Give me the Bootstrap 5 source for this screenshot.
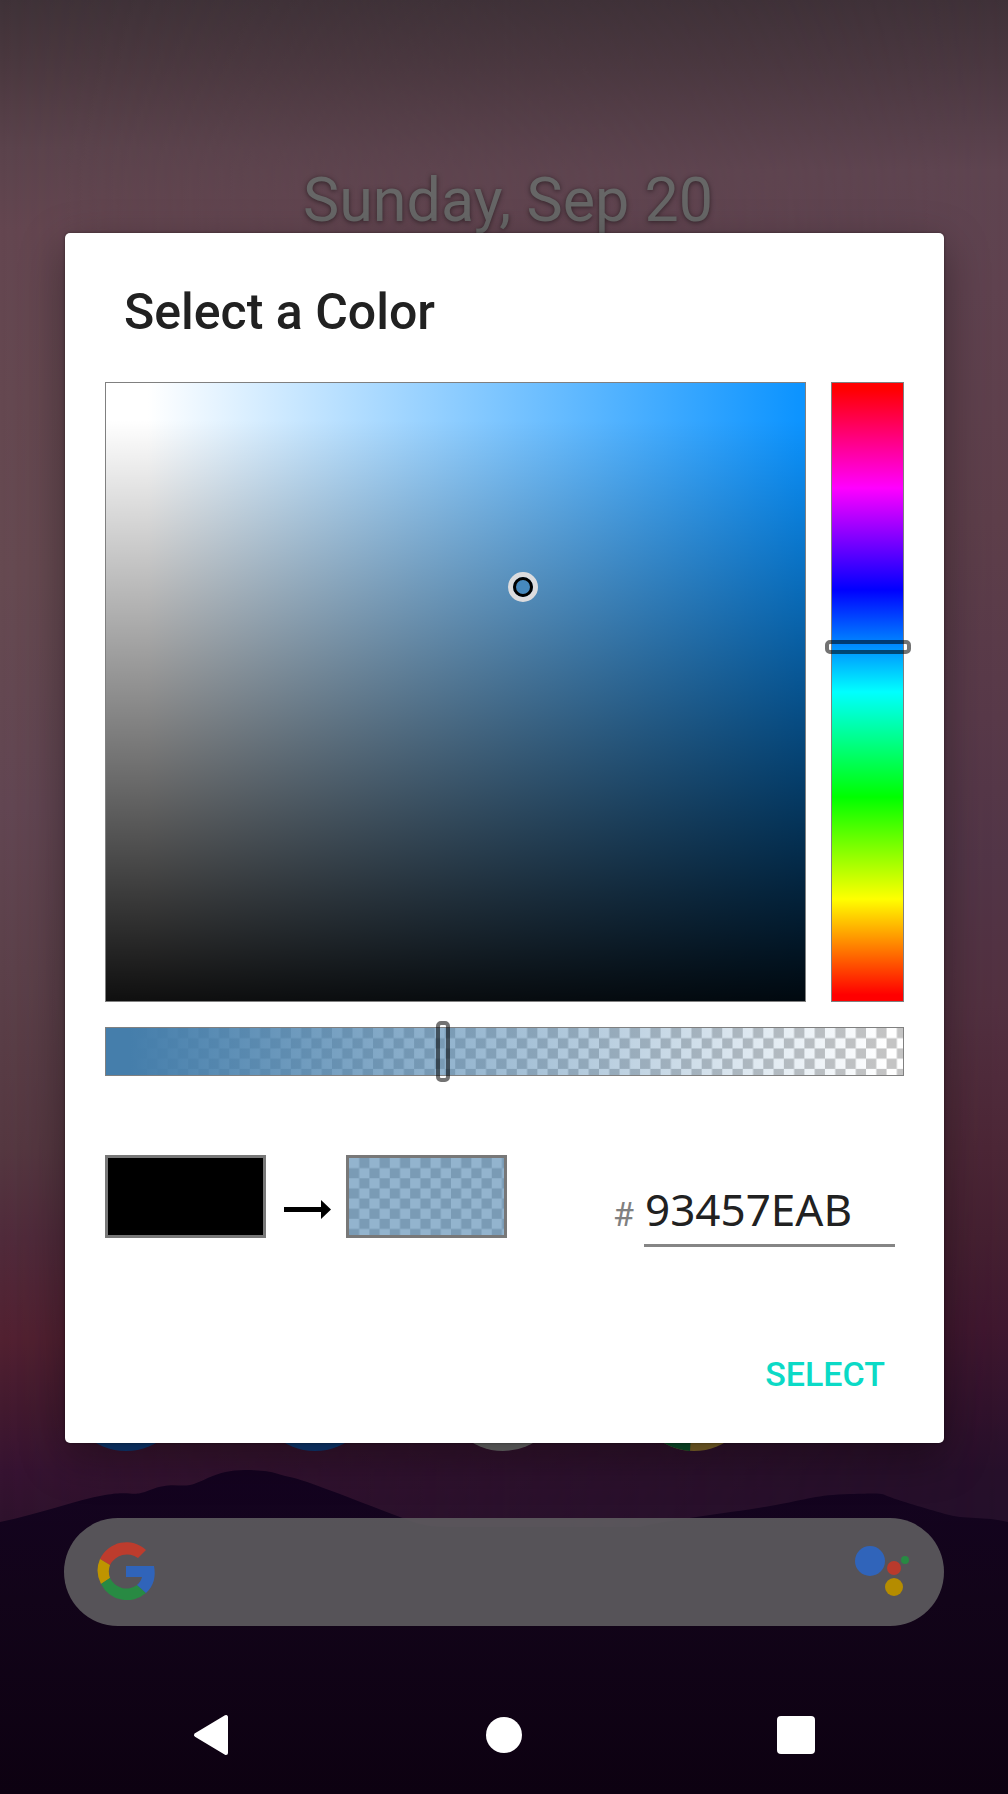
<!DOCTYPE html>
<html lang="en">
<head>
<meta charset="utf-8">
<meta name="viewport" content="width=device-width, initial-scale=1">
<title>Select a Color</title>
<link href="https://cdn.jsdelivr.net/npm/bootstrap@5.3.0/dist/css/bootstrap.min.css" rel="stylesheet">
<style>
  body { font-family: Roboto, "Liberation Sans", sans-serif; background: #0e0113; }
  .home-date { margin-top: 140px; font-size: 61px; line-height: 120px; color: #666; text-shadow: 0 1px 5px rgba(0,0,0,.5); padding-left: 8px; }
  .dock { padding: 0 64px; margin-bottom: 67px; }
  .app-icon { width: 120px; height: 120px; margin-left: 2px; }
  .search-pill { height: 108px; margin: 0 64px 50px; padding: 0 35px 0 33px; border-radius: 54px; background: rgba(94,92,95,.9); }
  .nav-keys { height: 118px; padding: 0 97px 0 96px; }
  .nav-key { width: 230px; height: 118px; }
  .dialog-layer { inset: 0 0 118px 0; padding: 0 64px 0 65px; }
  .dialog-panel { border-radius: 5px; box-shadow: 0 14px 44px rgba(0,0,0,.36), 0 0 3px rgba(0,0,0,.4); }
  .dialog-title { padding: 50px 59px 41px; font-size: 50px; line-height: 58px; font-weight: 500; color: #212121; }
  .picker { padding: 0 40px; }
  .picker-main { height: 620px; gap: 25px; }
  .edge { border: 1px solid #808080; }
  .sat-val {
    background:
      linear-gradient(to bottom, rgba(0,0,0,0) 6%, rgba(0,0,0,.94) 100%),
      linear-gradient(to right, #fff 6%, #0d94ff 99%);
  }
  .sat-marker { left: 59.6%; top: 33%; width: 30px; height: 30px; margin: -15px 0 0 -15px; border: 5px solid #dcdcde; }
  .sat-marker::after { content: ""; display: block; width: 20px; height: 20px; border: 3px solid #000; border-radius: 50%; background: #4688bd; }
  .hue-bar { width: 73px; background: linear-gradient(to bottom, #f00 1%, #f0f 17%, #00f 33.5%, #0ff 50%, #0f0 67%, #ff0 83.5%, #f00 99%); }
  .alpha-bar { height: 49px; margin-top: 25px; }
  .slide { -webkit-appearance: none; appearance: none; background: transparent; margin: 0; padding: 0; }
  .slide::-webkit-slider-thumb { -webkit-appearance: none; width: 14px; border: 4px solid rgba(0,0,0,.55); border-radius: 5px; background: transparent; }
  .slide-hue { width: 634px; height: 86px; left: 79px; top: -7px; transform-origin: 0 0; transform: rotate(90deg); }
  .slide-hue::-webkit-slider-thumb { height: 86px; }
  .slide-alpha { width: calc(100% + 14px); height: 61px; left: -8px; top: -7px; }
  .slide-alpha::-webkit-slider-thumb { height: 61px; }
  .result-row { margin-top: 79px; height: 92px; }
  .swatch { width: 161px; height: 83px; border: 3px solid #787878; }
  .swatch-old { background: #000; }
  .arrow { width: 47px; height: 19px; margin: 45px 15px 0 18px; }
  .hex-mark { font-size: 34px; line-height: 42px; color: #808080; padding: 0 10px 12px 0; }
  .hex-field { width: 251px; height: 74px; margin-right: 9px; padding: 0 1px; border: 0; border-bottom: 3px solid #858585; font-family: "Noto Sans", sans-serif; font-size: 44px; color: #212121; background: transparent; outline: 0; }
  .dialog-actions { padding: 79px 32px 21px; }
  .btn-select { height: 96px; padding: 0 27px; font-size: 34px; line-height: 40px; font-weight: 500; color: #0bdac6; border: 0; }
</style>
<script src="https://cdn.jsdelivr.net/npm/bootstrap@5.3.0/dist/js/bootstrap.bundle.min.js"></script>
</head>
<body>
<div class="position-relative min-vh-100 d-flex flex-column overflow-hidden">
  <!-- wallpaper: dusk sky with hills -->
  <svg class="position-absolute top-0 start-0 w-100 h-100" viewBox="0 0 1008 1794" preserveAspectRatio="none" aria-hidden="true">
    <defs>
      <linearGradient id="skyLeft" x1="0" y1="0" x2="0" y2="1">
        <stop offset="0" stop-color="#3f3238"/><stop offset=".04" stop-color="#4c3940"/><stop offset=".083" stop-color="#5b434c"/>
        <stop offset=".128" stop-color="#644650"/><stop offset=".32" stop-color="#664a51"/><stop offset=".45" stop-color="#624652"/>
        <stop offset=".54" stop-color="#5c414a"/><stop offset=".64" stop-color="#553841"/><stop offset=".69" stop-color="#502b3b"/>
        <stop offset=".746" stop-color="#522131"/><stop offset=".785" stop-color="#431a2f"/><stop offset=".82" stop-color="#361331"/>
        <stop offset=".85" stop-color="#2e122c"/>
      </linearGradient>
      <linearGradient id="skyRight" x1="0" y1="0" x2="0" y2="1">
        <stop offset="0" stop-color="#3f3138"/><stop offset=".04" stop-color="#4b3841"/><stop offset=".095" stop-color="#5e4450"/>
        <stop offset=".16" stop-color="#5f424f"/><stop offset=".29" stop-color="#5d3e4a"/><stop offset=".4" stop-color="#583949"/>
        <stop offset=".48" stop-color="#523547"/><stop offset=".56" stop-color="#523040"/><stop offset=".64" stop-color="#4c2636"/>
        <stop offset=".69" stop-color="#452031"/><stop offset=".74" stop-color="#3f172f"/><stop offset=".785" stop-color="#31122c"/>
        <stop offset=".82" stop-color="#260f2a"/><stop offset=".85" stop-color="#240f2a"/>
      </linearGradient>
      <linearGradient id="across"><stop offset="0" stop-color="#000"/><stop offset="1" stop-color="#fff"/></linearGradient>
      <mask id="fade"><rect width="1008" height="1794" fill="url(#across)"/></mask>
      <linearGradient id="hill" x1="0" y1="0" x2="0" y2="1">
        <stop offset="0" stop-color="#140320"/><stop offset=".4" stop-color="#120419"/><stop offset="1" stop-color="#0d0111"/>
      </linearGradient>
    </defs>
    <rect width="1008" height="1794" fill="url(#skyLeft)"/>
    <rect width="1008" height="1794" fill="url(#skyRight)" mask="url(#fade)"/>
    <path fill="url(#hill)" d="M0 1522C40 1514 75 1500 105 1495S130 1498 150 1490 178 1487 190 1485 215 1470 245 1470 275 1474 290 1477 350 1498 400 1517C420 1525 430 1527 450 1527H640C660 1521 730 1513 770 1506S815 1495 850 1494 880 1493 890 1497 925 1508 945 1514 985 1516 1008 1522V1794H0Z"/>
  </svg>

  <header class="position-relative text-center">
    <p class="home-date mb-0">Sunday, Sep 20</p>
  </header>

  <div class="dock position-relative d-flex mt-auto">
    <svg class="app-icon" viewBox="0 0 120 120" role="img" aria-label="Phone"><circle cx="60" cy="60" r="60" fill="#0e3a75"/></svg>
    <svg class="app-icon ms-auto" viewBox="0 0 120 120" role="img" aria-label="Messages"><circle cx="60" cy="60" r="60" fill="#0e3a75"/></svg>
    <svg class="app-icon mx-auto" viewBox="0 0 120 120" role="img" aria-label="Play Store"><circle cx="60" cy="60" r="60" fill="#6a6a6a"/></svg>
    <svg class="app-icon me-auto" viewBox="0 0 120 120" role="img" aria-label="Chrome"><circle cx="60" cy="60" r="60" fill="#7f662a"/><path d="M60 60 56 120A60 60 0 0 1 0 60Z" fill="#0b4f2b"/></svg>
    <span class="app-icon"></span>
  </div>

  <div class="search-pill position-relative d-flex align-items-center justify-content-between">
    <svg width="59" height="60" viewBox="0 0 59 60" role="img" aria-label="Google">
      <path d="M49 8 41 16A19 19 0 0 0 13 23L3 17A29 29 0 0 1 49 8Z" fill="#bd3c2d"/>
      <path d="M3 17 13 23A19 19 0 0 0 13 36L4 42A29 29 0 0 1 3 17Z" fill="#bf9400"/>
      <path d="M4 42 13 36A18 18 0 0 0 40 43L49 51A29 29 0 0 1 4 42Z" fill="#288a43"/>
      <path d="M29 24H57C59 34 57 44 49 51L40 43A14 14 0 0 0 45 35H29Z" fill="#3064ba"/>
    </svg>
    <svg width="54" height="52" viewBox="0 0 54 52" role="img" aria-label="Assistant">
      <circle cx="15" cy="15" r="15" fill="#3064ba"/><circle cx="39" cy="22" r="7" fill="#b93a2c"/>
      <circle cx="50" cy="14" r="4" fill="#288a43"/><circle cx="39" cy="41" r="9" fill="#b58c00"/>
    </svg>
  </div>

  <nav class="nav-keys position-relative d-flex justify-content-between" aria-label="System">
    <button class="nav-key btn border-0 p-0" type="button" aria-label="Back"><svg width="36" height="42" viewBox="0 0 36 42"><path d="M33 3V39L3 21Z" fill="#fff" stroke="#fff" stroke-width="4" stroke-linejoin="round"/></svg></button>
    <button class="nav-key btn border-0 p-0" type="button" aria-label="Home"><svg width="38" height="38" viewBox="0 0 38 38"><circle cx="19" cy="19" r="18" fill="#fff"/></svg></button>
    <button class="nav-key btn border-0 p-0" type="button" aria-label="Recent apps"><svg width="38" height="38" viewBox="0 0 38 38"><rect width="38" height="38" rx="4" fill="#fff"/></svg></button>
  </nav>

  <div class="dialog-layer position-absolute d-flex align-items-center">
    <section class="dialog-panel bg-white w-100" role="dialog" aria-labelledby="dlgTitle">
      <h1 class="dialog-title mb-0" id="dlgTitle">Select a Color</h1>
      <div class="picker">
        <div class="picker-main d-flex">
          <div class="sat-val edge position-relative flex-grow-1">
            <span class="sat-marker position-absolute rounded-circle"></span>
          </div>
          <div class="hue-bar edge position-relative flex-shrink-0">
            <input class="slide slide-hue position-absolute" type="range" min="0" max="360" value="153" aria-label="Hue">
          </div>
        </div>
        <div class="alpha-bar edge position-relative">
          <svg class="d-block w-100 h-100" viewBox="0 0 776 46" preserveAspectRatio="none" aria-hidden="true">
            <defs>
              <pattern id="checks" width="20" height="20" patternUnits="userSpaceOnUse"><rect width="20" height="20" fill="#fff"/><path d="M10 0h10v10H10zM0 10h10v10H0z" fill="#c4c4c4"/></pattern>
              <linearGradient id="alphaFade"><stop offset=".03" stop-color="#457eab"/><stop offset=".98" stop-color="#457eab" stop-opacity="0"/></linearGradient>
            </defs>
            <rect width="776" height="46" fill="url(#checks)"/>
            <rect width="776" height="46" fill="url(#alphaFade)"/>
          </svg>
          <input class="slide slide-alpha position-absolute" type="range" min="0" max="255" value="108" aria-label="Transparency">
        </div>
        <div class="result-row d-flex align-items-start">
          <div class="swatch swatch-old"></div>
          <svg class="arrow" viewBox="0 0 47 19" aria-hidden="true"><path d="M0 7H37V0L47 9.500 37 19V12H0Z"/></svg>
          <div class="swatch">
            <svg class="d-block w-100 h-100" viewBox="0 0 152 76" preserveAspectRatio="none" aria-hidden="true">
              <rect width="152" height="76" fill="url(#checks)"/><rect width="152" height="76" fill="#457eab" fill-opacity=".58"/>
            </svg>
          </div>
          <div class="d-flex align-items-end ms-auto align-self-end">
            <label class="hex-mark" for="hex">#</label>
            <input class="hex-field" id="hex" type="text" value="93457EAB" maxlength="8">
          </div>
        </div>
      </div>
      <div class="dialog-actions d-flex justify-content-end">
        <button class="btn-select btn" type="button">SELECT</button>
      </div>
    </section>
  </div>
</div>
</body>
</html>
